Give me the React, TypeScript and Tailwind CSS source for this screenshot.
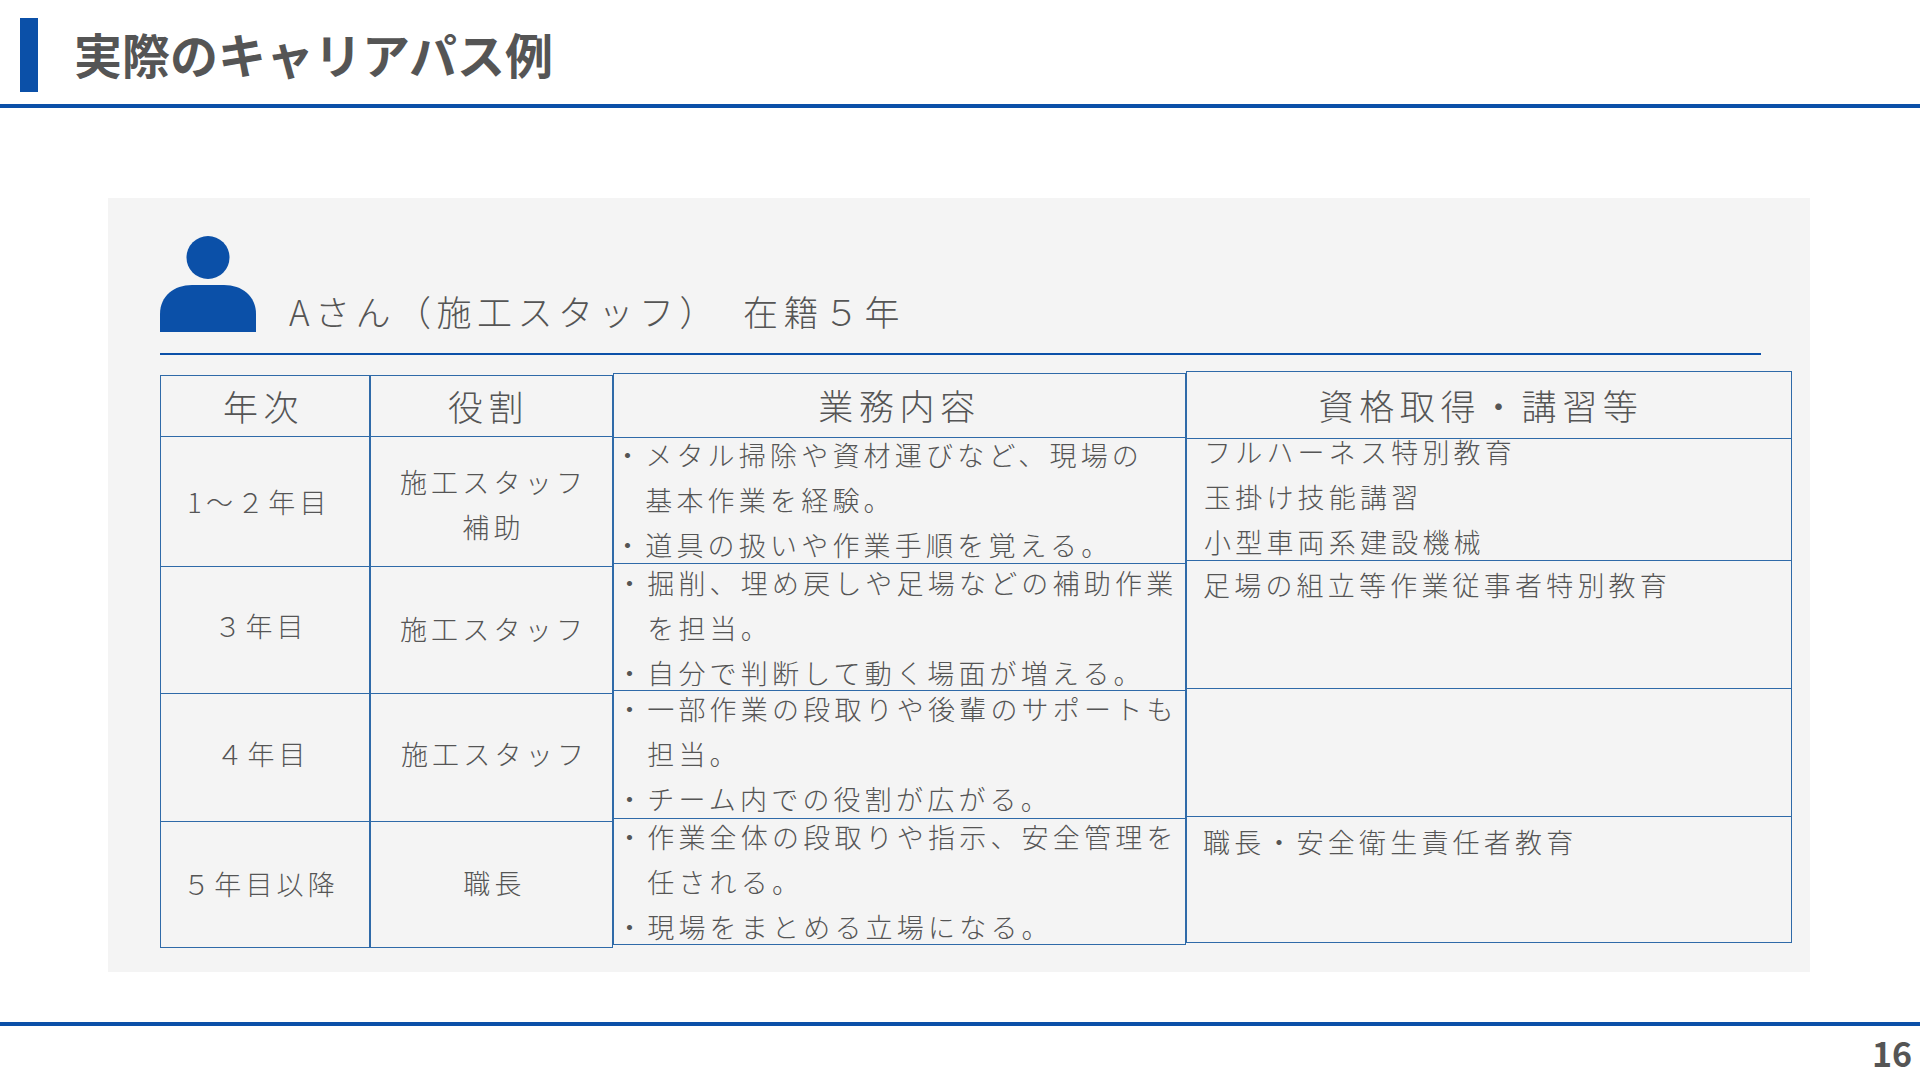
const JP = "font-['Noto_Sans_CJK_JP',sans-serif]";

type Cell = { lines: string[]; cls: string };

const COLUMNS: { width: string; top: string; headCls: string; header: string; heights: string[]; align: string; cells: Cell[] }[] = [
  {
    width: "w-[210px]",
    top: "mt-[20px]",
    header: "年次",
    headCls: "pr-[3px]",
    heights: ["h-[62px]", "h-[130px]", "h-[127px]", "h-[128px]", "h-[126px]"],
    align: "center",
    cells: [
      { lines: ["1～２年目"], cls: "pr-[12px]" },
      { lines: ["３年目"], cls: "pr-[8px] pb-[10px]" },
      { lines: ["４年目"], cls: "pr-[4px] pb-[8px]" },
      { lines: ["５年目以降"], cls: "pr-[8px] pb-[2px]" },
    ],
  },
  {
    width: "w-[243px]",
    top: "mt-[20px]",
    header: "役割",
    headCls: "pr-[6px]",
    heights: ["h-[62px]", "h-[130px]", "h-[127px]", "h-[128px]", "h-[126px]"],
    align: "center",
    cells: [
      { lines: ["施工スタッフ", "補助"], cls: "pl-[4px] pt-[4px]" },
      { lines: ["施工スタッフ"], cls: "pl-[4px] pb-[4px]" },
      { lines: ["施工スタッフ"], cls: "pl-[6px] pb-[8px]" },
      { lines: ["職長"], cls: "pl-[6px] pb-[4px]" },
    ],
  },
  {
    width: "w-[573px]",
    top: "mt-[18px]",
    header: "業務内容",
    headCls: "pb-[1px]",
    heights: ["h-[65px]", "h-[126px]", "h-[127px]", "h-[128px]", "h-[126px]"],
    align: "left",
    cells: [
      { lines: ["・メタル掃除や資材運びなど、現場の", "　基本作業を経験。", "・道具の扱いや作業手順を覚える。"], cls: "-mt-[6px]" },
      { lines: ["・掘削、埋め戻しや足場などの補助作業", "　を担当。", "・自分で判断して動く場面が増える。"], cls: "-mt-[4px] ml-[2px]" },
      { lines: ["・一部作業の段取りや後輩のサポートも", "　担当。", "・チーム内での役割が広がる。"], cls: "-mt-[5px] ml-[2px]" },
      { lines: ["・作業全体の段取りや指示、安全管理を", "　任される。", "・現場をまとめる立場になる。"], cls: "-mt-[5px] ml-[2px]" },
    ],
  },
  {
    width: "w-[606px]",
    top: "mt-[16px]",
    header: "資格取得・講習等",
    headCls: "pr-[16px]",
    heights: ["h-[68px]", "h-[122px]", "h-[128px]", "h-[128px]", "h-[126px]"],
    align: "left",
    cells: [
      { lines: ["フルハーネス特別教育", "玉掛け技能講習", "小型車両系建設機械"], cls: "-mt-[10px] ml-[17px]" },
      { lines: ["足場の組立等作業従事者特別教育"], cls: "mt-[1px] ml-[16px]" },
      { lines: [], cls: "" },
      { lines: ["職長・安全衛生責任者教育"], cls: "mt-[2px] ml-[16px]" },
    ],
  },
];

export default function App() {
  return (
    <div className={`flex h-[1080px] w-[1920px] flex-col overflow-hidden bg-white text-[#555555] ${JP}`}>
      <header className="flex h-[108px] items-start gap-[36px] border-b-[4px] border-[#0b50a8] pl-[20px] pt-[18px]">
        <div className="h-[74px] w-[18px] bg-[#0b50a8]" />
        <h1 className="-mt-[2px] text-[48px] font-bold leading-[74px]">実際のキャリアパス例</h1>
      </header>

      <main className="ml-[108px] mt-[90px] h-[774px] w-[1702px] bg-[#f4f4f4] pl-[52px] pt-[37px]">
        <div className="flex h-[120px] w-[1601px] items-end border-b-[2px] border-[#0b50a8] pb-[21px]">
          <svg width="96" height="96" viewBox="0 0 96 96" className="shrink-0 fill-[#0b50a8]">
            <circle cx="48" cy="21.500" r="21.500" />
            <path d="M0 96V78C0 60 14 49 32 49H64C82 49 96 60 96 78V96Z" />
          </svg>
          <p className="mb-[1px] ml-[33px] text-[35px] font-light leading-[40px] tracking-[5.500px]">Aさん（施工スタッフ）　在籍５年</p>
        </div>

        <div className="flex">
          {COLUMNS.map((col) => (
            <div key={col.header} className={`${col.width} ${col.top} shrink-0`}>
              <div className={`${col.heights[0]} ${col.headCls} flex items-center justify-center border border-[#2f6aa8] text-[35px] font-light tracking-[5.600px]`}>
                {col.header}
              </div>
              {col.cells.map((cell, i) => (
                <div
                  key={i}
                  className={`${col.heights[i + 1]} flex border-x border-b border-[#2f6aa8] text-[27px] font-light leading-[45px] tracking-[4.200px] ${
                    col.align === "center" ? "items-center justify-center" : "items-start"
                  }`}
                >
                  <div className={`flex flex-col ${cell.cls} ${col.align === "center" ? "items-center" : ""}`}>
                    {cell.lines.map((line) => (
                      <span key={line} className="whitespace-nowrap">{line}</span>
                    ))}
                  </div>
                </div>
              ))}
            </div>
          ))}
        </div>
      </main>

      <footer className="mt-[50px] flex h-[58px] justify-end border-t-[4px] border-[#0b50a8] pr-[8px]">
        <span className="text-[34px] font-bold leading-[54px]">16</span>
      </footer>
    </div>
  );
}
